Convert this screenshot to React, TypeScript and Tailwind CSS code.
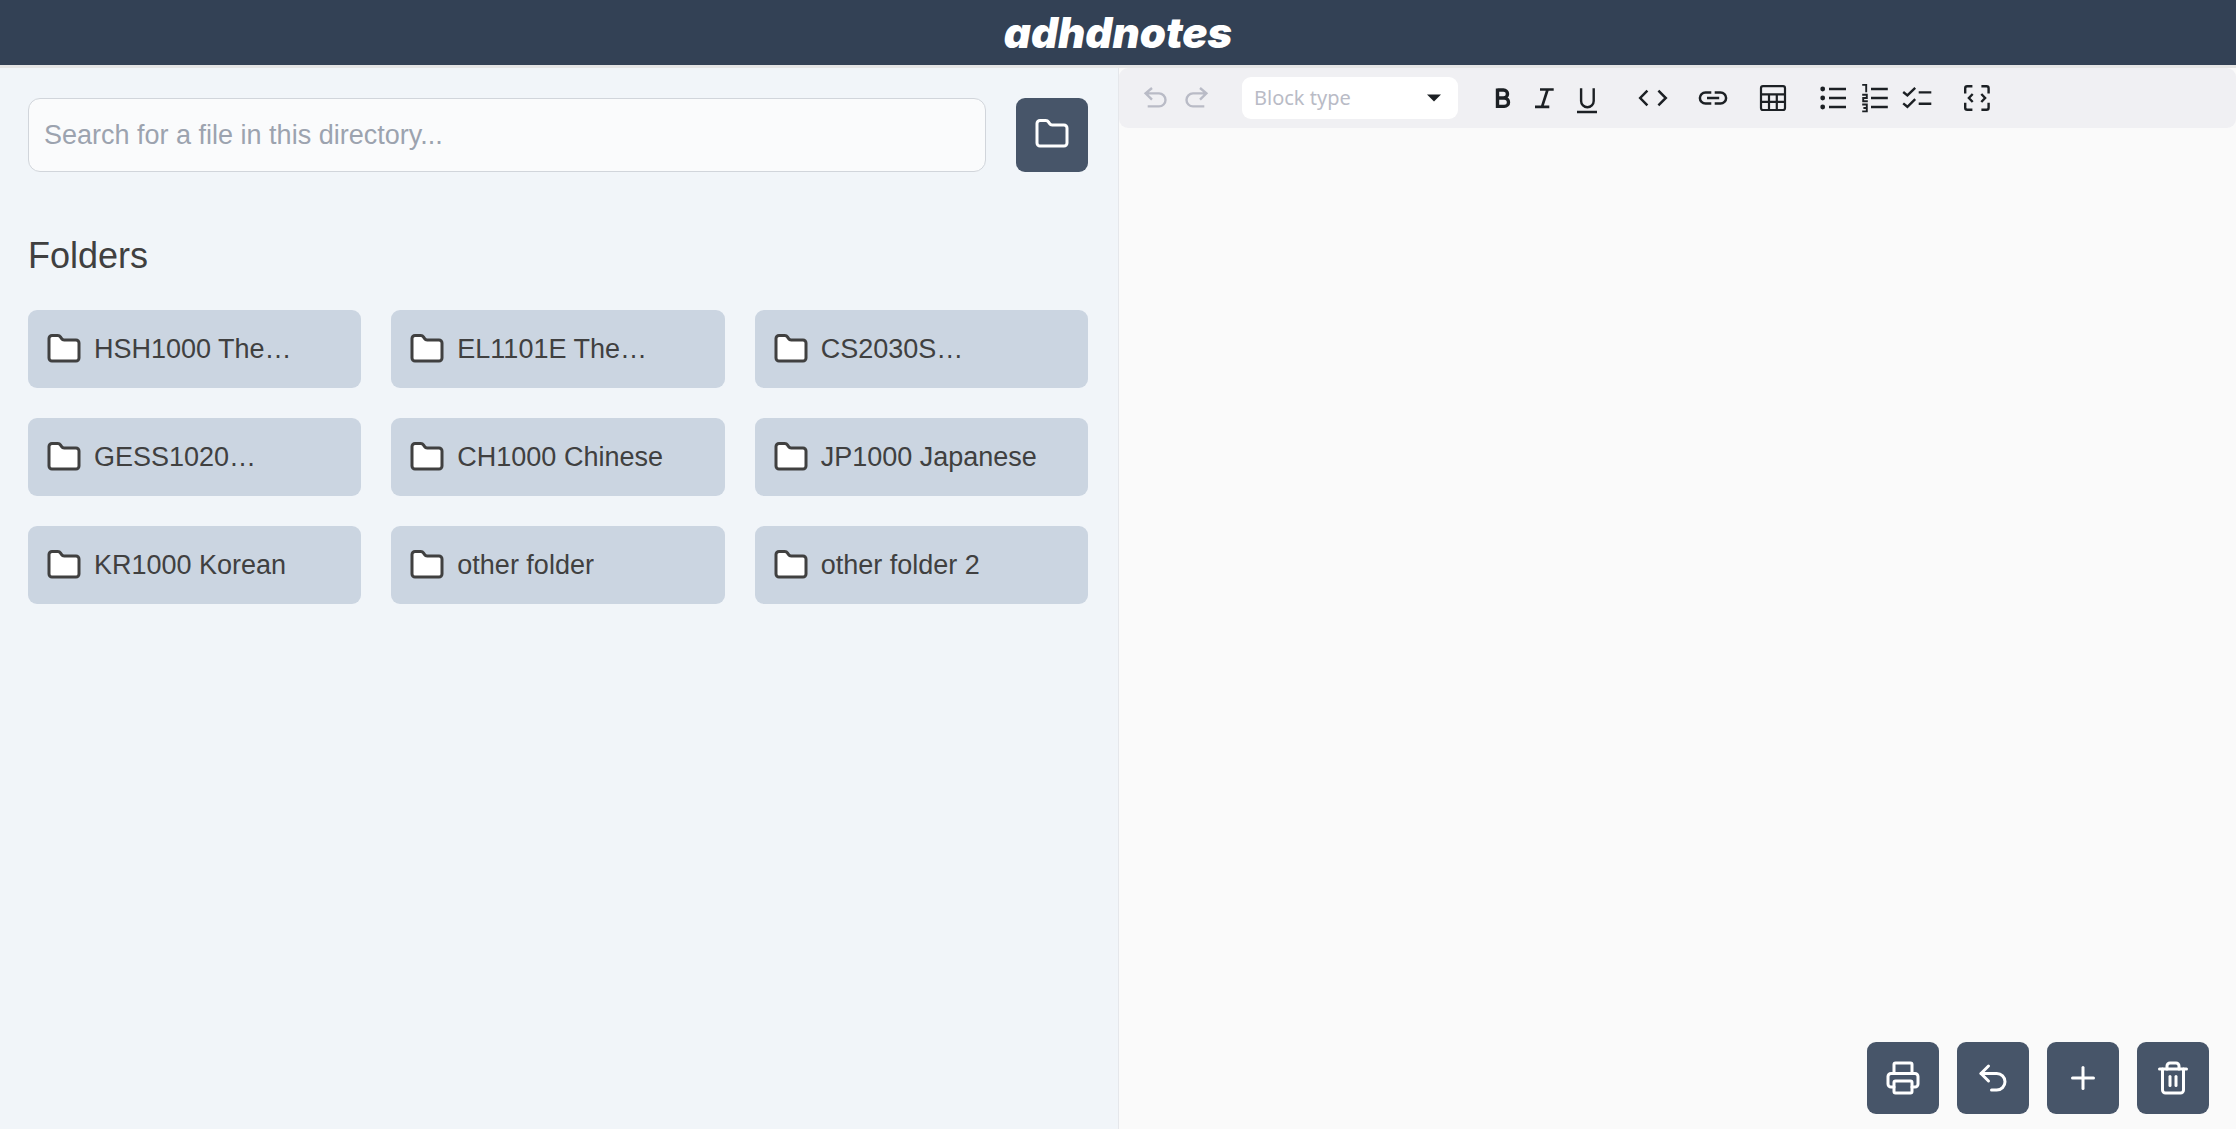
import React from "react";
import { Folder, Plus, Printer, Trash2, Undo2 } from "lucide-react";

const folders = [
  "HSH1000 The…",
  "EL1101E The…",
  "CS2030S…",
  "GESS1020…",
  "CH1000 Chinese",
  "JP1000 Japanese",
  "KR1000 Korean",
  "other folder",
  "other folder 2",
];

type ToolProps = {
  label: string;
  d: string;
  stroke?: number;
  disabled?: boolean;
  children?: React.ReactNode;
};

function Tool({ label, d, stroke = 2.4, disabled, children }: ToolProps) {
  return (
    <button
      type="button"
      aria-label={label}
      disabled={disabled}
      className="flex size-[42px] shrink-0 items-center justify-center rounded-md text-[#1c2024] disabled:text-[#b9bbc6]"
    >
      <svg viewBox="0 0 36 36" className="size-9" fill="none" stroke="currentColor" strokeWidth={stroke}>
        <path d={d} />
        {children}
      </svg>
    </button>
  );
}

function ActionButton({ label, children }: { label: string; children: React.ReactNode }) {
  return (
    <button
      type="button"
      aria-label={label}
      className="flex size-[72px] items-center justify-center rounded-[9px] bg-[#475569] text-white"
    >
      {children}
    </button>
  );
}

function Toolbar() {
  return (
    <div role="toolbar" aria-label="Formatting" className="flex h-[60px] items-center gap-6 rounded-[9px] bg-[#f0f0f3] px-[15px]">
      <div className="flex">
        <Tool label="Undo" disabled d="M15 8 L8.6 13.4 L15 19.6 M8.6 13.4 H22 a6.5 6.5 0 0 1 0 13 H10.7" />
        <Tool label="Redo" disabled d="M21 8 L27.4 13.4 L21 19.6 M27.4 13.4 H14 a6.5 6.5 0 0 0 0 13 H25.3" />
      </div>
      <div className="relative">
        <select
          aria-label="Block type"
          defaultValue=""
          className="block h-[42px] w-[216px] appearance-none rounded-[9px] bg-white px-3 font-['Noto_Sans','Open_Sans',sans-serif] text-[20px] text-[#b9bbc6]"
        >
          <option value="">Block type</option>
        </select>
        <svg viewBox="0 0 14 8" className="pointer-events-none absolute top-[17px] right-[17px] h-2 w-[14px]" fill="#1c2024">
          <path d="M0 0.5h14L7 7.5z" />
        </svg>
      </div>
      <div className="flex">
        <Tool label="Bold" stroke={3.4} d="M12.5 10 H18.5 a4 4 0 0 1 0 8 H12.5 M12.5 18 H19.3 a4.2 4.2 0 0 1 0 8.4 H12.5 M12.5 8.4 V28" />
        <Tool label="Italic" stroke={2.7} d="M13 9.5 H26.7 M8 26.9 H22.3 M20.6 9.5 L15 26.9" />
        <Tool label="Underline" d="M12.1 8.2 V21 a6.3 6.3 0 0 0 12.6 0 V8.2 M8 32 H28" />
      </div>
      <div className="flex gap-[18px]">
        <Tool label="Inline code" stroke={2.5} d="M12.4 10.6 L5.2 18 L12.4 25.4 M23.4 10.6 L30.8 18 L23.4 25.4" />
        <Tool label="Link" stroke={2.5} d="M16.3 12.4 H10.5 a5.6 5.6 0 0 0 0 11.2 H16.3 M19.7 12.4 H25.5 a5.6 5.6 0 0 1 0 11.2 H19.7 M12 18 H24.2" />
        <Tool label="Table" stroke={2.2} d="M8 6.2 H28 a2 2 0 0 1 2 2 V28 a2 2 0 0 1 -2 2 H8 a2 2 0 0 1 -2 -2 V8.2 a2 2 0 0 1 2 -2 Z M6 14.3 H30 M6 21.8 H30 M14 14.3 V30 M21.8 14.3 V30" />
        <div className="flex">
          <Tool label="Bulleted list" d="M14 9 H31 M14 18 H31 M14 27 H31">
            <g fill="currentColor" stroke="none">
              <circle cx="7.7" cy="9" r="2.4" />
              <circle cx="7.7" cy="18" r="2.4" />
              <circle cx="7.7" cy="27" r="2.4" />
            </g>
          </Tool>
          <Tool label="Numbered list" d="M14 9 H30.8 M14 18 H30.8 M14 27 H30.8">
            <path
              strokeWidth="1.9"
              d="M5.2 4.9 H9.2 V12.3 M5.2 14.8 H9.8 V18 H6.2 V21.3 H10.8 M5.2 24.5 H9.8 V31.4 H5.2 M6.4 28 H9.8"
            />
          </Tool>
          <Tool label="Check list" d="M4.2 12 L8.4 15.4 L16.2 7.8 M4.2 23.4 L8.4 26.8 L16.2 19.2 M19.7 12.4 H32.3 M19.7 23.8 H32.3" />
        </div>
        <Tool
          label="Code block"
          d="M6.2 13.6 V8.2 a2 2 0 0 1 2 -2 H13.4 M22.4 6.2 H27.6 a2 2 0 0 1 2 2 V13.6 M29.6 22.8 V27.8 a2 2 0 0 1 -2 2 H22.4 M13.4 29.8 H8.2 a2 2 0 0 1 -2 -2 V22.8 M13.7 14 L9.9 18 L13.7 22 M22.3 14 L26.1 18 L22.3 22"
        />
      </div>
    </div>
  );
}

export default function App() {
  return (
    <div className="flex min-h-screen flex-col bg-[#fafafa] font-['Liberation_Sans',Arial,sans-serif] text-[#404040]">
      <header className="flex h-[68px] items-center justify-center border-b-[3px] border-[#e5e5e5] bg-[#334155]">
        <h1 className="font-['Inter',sans-serif] text-[42px] leading-[60px] font-black text-white italic">adhdnotes</h1>
      </header>
      <main className="grid flex-1 grid-cols-2">
        <section className="bg-[#f1f5f9] py-[30px] pr-[30px] pl-7">
          <div className="flex gap-[30px]">
            <input
              type="text"
              aria-label="Search for a file in this directory"
              placeholder="Search for a file in this directory..."
              className="h-[74px] min-w-0 flex-1 rounded-xl border border-[#d1d5db] bg-[#fafbfc] px-[15px] text-[27px] placeholder:text-[#9ca3af]"
            />
            <button
              type="button"
              aria-label="New folder"
              className="flex h-[74px] w-[72px] items-center justify-center rounded-[9px] bg-[#475569] pb-0.5 text-white"
            >
              <Folder className="size-9" />
            </button>
          </div>
          <h2 className="mt-[60px] text-[36px] leading-[48px]">Folders</h2>
          <div className="mt-[30px] grid grid-cols-3 gap-[30px]">
            {folders.map((name) => (
              <button
                key={name}
                type="button"
                className="flex h-[78px] items-center gap-3 rounded-[9px] bg-[#cbd5e1] px-[18px] text-left text-[27px]"
              >
                <Folder className="size-9 shrink-0" fill="white" />
                <span className="truncate">{name}</span>
              </button>
            ))}
          </div>
        </section>
        <section className="flex flex-col border-l border-[#e5e7eb]">
          <Toolbar />
          <div role="textbox" aria-label="Note" className="flex-1" />
          <div className="flex justify-end gap-[18px] pr-[27px] pb-[15px]">
            <ActionButton label="Print">
              <Printer className="size-9" />
            </ActionButton>
            <ActionButton label="Undo changes">
              <Undo2 className="size-9" />
            </ActionButton>
            <ActionButton label="New note">
              <Plus className="size-9" />
            </ActionButton>
            <ActionButton label="Delete note">
              <Trash2 className="size-9" />
            </ActionButton>
          </div>
        </section>
      </main>
    </div>
  );
}
